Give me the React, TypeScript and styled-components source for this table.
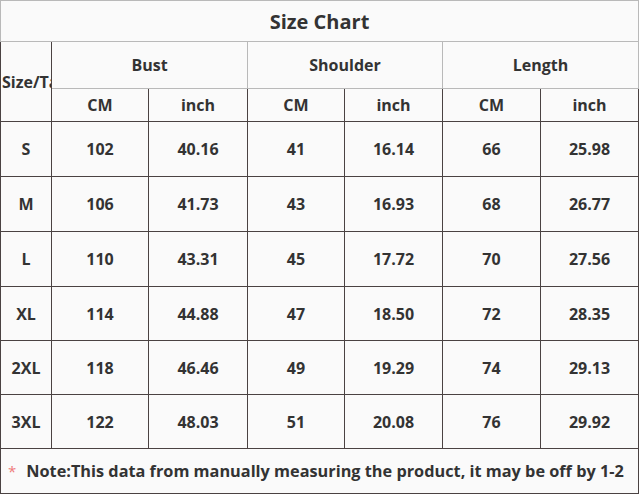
import React from 'react';
import styled, { createGlobalStyle } from 'styled-components';

const GlobalStyle = createGlobalStyle`
  html, body { margin: 0; padding: 0; background: #ffffff; }
  body { font-family: "Open Sans", "Liberation Sans", sans-serif; }
`;

const Table = styled.table`
  border-collapse: collapse;
  table-layout: fixed;
  width: 639px;
  background: #fafafa;
  color: #333333;
  font-weight: 700;
  border: 1px solid #3c3434;
`;

const Cell = styled.td<{ $h?: number; $size?: number; $light?: boolean }>`
  border: 1px solid ${(p) => (p.$light ? '#b9b9b9' : '#4a4242')};
  height: ${(p) => p.$h ?? 53}px;
  padding: 0;
  text-align: center;
  vertical-align: middle;
  font-size: ${(p) => p.$size ?? 16}px;
  white-space: nowrap;
  overflow: hidden;
`;

const SizeCell = styled(Cell)`
  text-align: left;
  padding-left: 1px;
  text-overflow: clip;
`;

const NoteCell = styled(Cell)`
  text-align: left;
  padding-left: 7px;
  font-size: 16.3px;
`;

const Star = styled.span`
  color: #ef7b7b;
  font-weight: 400;
  font-size: 15px;
  margin-right: 10px;
`;

const widths = [51, 97, 99, 97, 98, 98, 98];

const rows = [
  ['S', '102', '40.16', '41', '16.14', '66', '25.98'],
  ['M', '106', '41.73', '43', '16.93', '68', '26.77'],
  ['L', '110', '43.31', '45', '17.72', '70', '27.56'],
  ['XL', '114', '44.88', '47', '18.50', '72', '28.35'],
  ['2XL', '118', '46.46', '49', '19.29', '74', '29.13'],
  ['3XL', '122', '48.03', '51', '20.08', '76', '29.92'],
];

const heights = [54, 54, 54, 53, 53, 53];

export default function App() {
  return (
    <>
      <GlobalStyle />
      <Table>
        <colgroup>
          {widths.map((w, i) => (
            <col key={i} style={{ width: w }} />
          ))}
        </colgroup>
        <tbody>
          <tr>
            <Cell colSpan={7} $h={40} $size={20} $light>
              Size Chart
            </Cell>
          </tr>
          <tr>
            <SizeCell rowSpan={2} $h={46}>Size/Tag</SizeCell>
            <Cell colSpan={2} $h={46} $light>Bust</Cell>
            <Cell colSpan={2} $h={46} $light>Shoulder</Cell>
            <Cell colSpan={2} $h={46} $light>Length</Cell>
          </tr>
          <tr>
            {['CM', 'inch', 'CM', 'inch', 'CM', 'inch'].map((t, i) => (
              <Cell key={i} $h={32}>{t}</Cell>
            ))}
          </tr>
          {rows.map((r, i) => (
            <tr key={r[0]}>
              {r.map((v, j) => (
                <Cell key={j} $h={heights[i]}>{v}</Cell>
              ))}
            </tr>
          ))}
          <tr>
            <NoteCell colSpan={7} $h={44}>
              <Star>*</Star>
              Note:This data from manually measuring the product, it may be off by 1-2
            </NoteCell>
          </tr>
        </tbody>
      </Table>
    </>
  );
}
